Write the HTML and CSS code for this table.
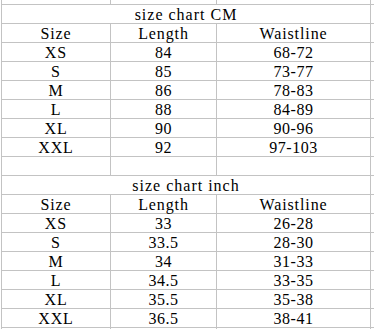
FILE: index.html
```html
<!DOCTYPE html>
<html>
<head>
<meta charset="utf-8">
<link rel="stylesheet" href="styles.css">
</head>
<body>
<div class="sheet">
  <div class="cell edge"></div><div class="cell edge"></div><div class="cell edge"></div><div class="cell edge"></div>

  <div class="cell title">size chart CM</div><div class="cell"></div>
  <div class="cell label">Size</div><div class="cell label">Length</div><div class="cell label">Waistline</div><div class="cell"></div>
  <div class="cell label">XS</div><div class="cell num">84</div><div class="cell num">68-72</div><div class="cell"></div>
  <div class="cell label">S</div><div class="cell num">85</div><div class="cell num">73-77</div><div class="cell"></div>
  <div class="cell label">M</div><div class="cell num">86</div><div class="cell num">78-83</div><div class="cell"></div>
  <div class="cell label">L</div><div class="cell num">88</div><div class="cell num">84-89</div><div class="cell"></div>
  <div class="cell label">XL</div><div class="cell num">90</div><div class="cell num">90-96</div><div class="cell"></div>
  <div class="cell label">XXL</div><div class="cell num">92</div><div class="cell num">97-103</div><div class="cell"></div>
  <div class="cell"></div><div class="cell"></div><div class="cell"></div><div class="cell"></div>

  <div class="cell title">size chart inch</div><div class="cell"></div>
  <div class="cell label">Size</div><div class="cell label">Length</div><div class="cell label">Waistline</div><div class="cell"></div>
  <div class="cell label">XS</div><div class="cell num">33</div><div class="cell num">26-28</div><div class="cell"></div>
  <div class="cell label">S</div><div class="cell num">33.5</div><div class="cell num">28-30</div><div class="cell"></div>
  <div class="cell label">M</div><div class="cell num">34</div><div class="cell num">31-33</div><div class="cell"></div>
  <div class="cell label">L</div><div class="cell num">34.5</div><div class="cell num">33-35</div><div class="cell"></div>
  <div class="cell label">XL</div><div class="cell num">35.5</div><div class="cell num">35-38</div><div class="cell"></div>
  <div class="cell label">XXL</div><div class="cell num">36.5</div><div class="cell num">38-41</div><div class="cell"></div>

  <div class="cell tail"></div><div class="cell tail"></div><div class="cell tail"></div><div class="cell tail"></div>
</div>
</body>
</html>
```

FILE: styles.css
```css
html, body {
  margin: 0;
  padding: 0;
  background: #ffffff;
  overflow: hidden;
}

.sheet {
  margin-left: 1px;
  border-left: 1px solid #c3c3c3;
  display: grid;
  grid-template-columns: 109px 106px 154px 4px;
  grid-template-rows: 5px repeat(17, 19px) 4px;
  font-family: "Liberation Serif", "Times New Roman", serif;
  font-size: 16px;
  color: #000;
}

.cell {
  box-sizing: border-box;
  border-right: 1px solid #c3c3c3;
  border-bottom: 1px solid #c3c3c3;
  display: flex;
  align-items: flex-end;
  justify-content: center;
  line-height: 16px;
  white-space: nowrap;
}

.tail {
  border-bottom: none;
}

.title {
  grid-column: span 3;
  letter-spacing: 1px;
}

.label {
  letter-spacing: 0.9px;
}

.num {
  letter-spacing: 0.5px;
}
```
